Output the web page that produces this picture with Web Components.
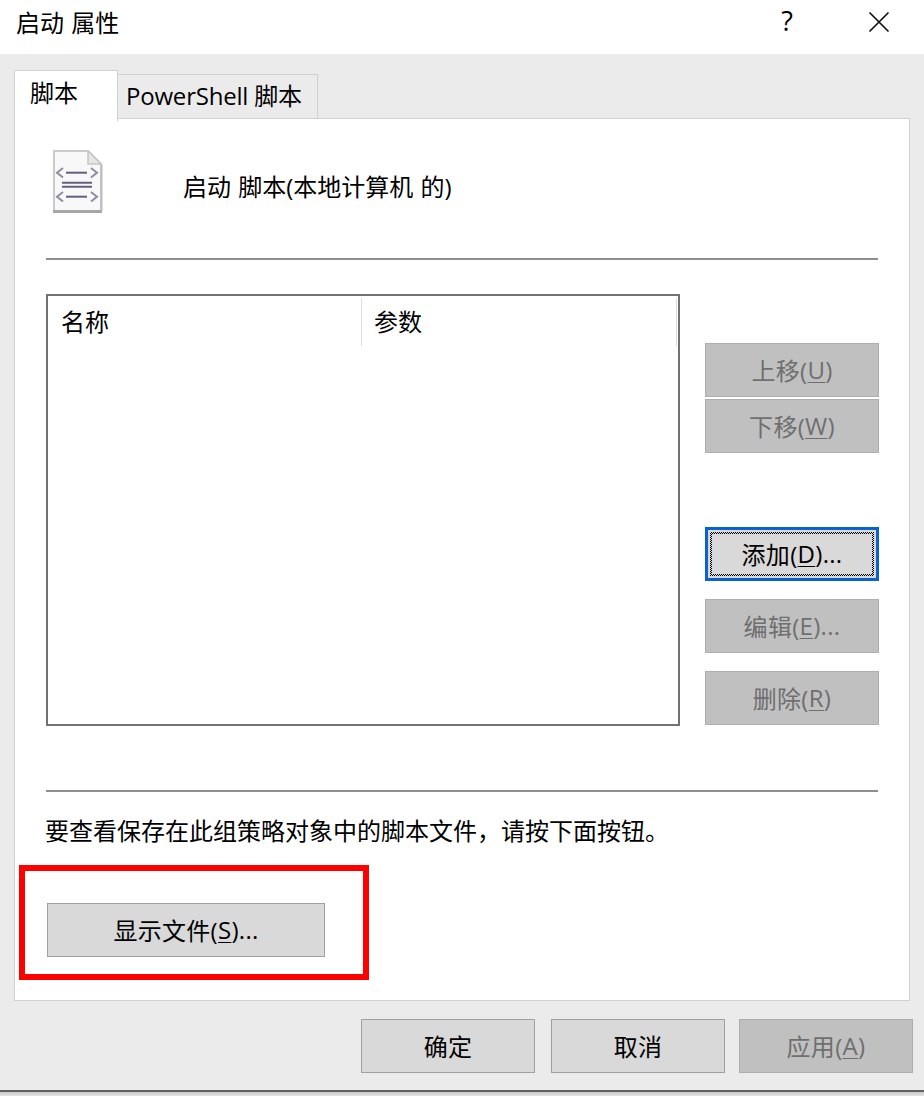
<!DOCTYPE html>
<html lang="zh-CN">
<head>
<meta charset="utf-8">
<title>启动 属性</title>
<style>
    html, body { margin: 0; background: #fff; }
    body { font: 24px "Segoe UI", "Open Sans", "Noto Sans CJK SC", sans-serif; color: #000; }
    u { text-decoration-thickness: 1px; text-underline-offset: 3px; }
</style>
</head>
<body>
<props-dialog>
    <span slot="title">启动 属性</span>
    <dialog-tabs slot="tabs">
        <span slot="active">脚本</span>
        <span slot="other">PowerShell 脚本</span>
    </dialog-tabs>
    <script-panel>
        <span slot="heading">启动 脚本(本地计算机 的)</span>
        <span slot="col1">名称</span>
        <span slot="col2">参数</span>
        <dialog-button slot="side" disabled>上移(<u>U</u>)</dialog-button>
        <dialog-button slot="side" disabled class="gap-s">下移(<u>W</u>)</dialog-button>
        <dialog-button slot="side" focused class="gap-a">添加(<u>D</u>)...</dialog-button>
        <dialog-button slot="side" disabled class="gap-b">编辑(<u>E</u>)...</dialog-button>
        <dialog-button slot="side" disabled class="gap-b">删除(<u>R</u>)</dialog-button>
        <span slot="note">要查看保存在此组策略对象中的脚本文件，请按下面按钮。</span>
        <dialog-button slot="show" style="width:278px">显示文件(<u>S</u>)...</dialog-button>
    </script-panel>
    <dialog-button slot="footer">确定</dialog-button>
    <dialog-button slot="footer">取消</dialog-button>
    <dialog-button slot="footer" disabled class="apply">应用(<u>A</u>)</dialog-button>
</props-dialog>

<script>
class PropsDialog extends HTMLElement {
    constructor() {
        super();
        this.attachShadow({ mode: 'open' });
        this.shadowRoot.innerHTML = `
            <style>
                :host {
                    display: flex;
                    flex-direction: column;
                    height: 1096px;
                    overflow: hidden;
                    background: #ebebeb;
                }
                .titlebar {
                    flex: none;
                    height: 54px;
                    display: flex;
                    align-items: center;
                    background: #fff;
                    padding: 0 0 12px 16px;
                    box-sizing: border-box;
                }
                .title { flex: 1; word-spacing: 1px; }
                .help { width: 22px; margin: 0 70px 2px 0; text-align: center; font-size: 27px; line-height: 1; }
                .close { width: 22px; height: 22px; margin: 2px 34px 0 0; display: block; }
                .body { flex: 1; padding: 16px 14px 0; min-height: 0; }
                .footer {
                    display: flex;
                    justify-content: flex-end;
                    gap: 16px;
                    padding-top: 18px;
                    margin-right: -3px;
                }
                ::slotted(.apply) { margin-left: -2px; }
                .edge {
                    flex: none;
                    height: 6px;
                    border-top: 2px solid #626262;
                    box-sizing: border-box;
                    background: linear-gradient(#c8c8c8, #e4e4e4);
                }
            </style>
            <div class="titlebar">
                <div class="title"><slot name="title"></slot></div>
                <div class="help">?</div>
                <svg class="close" viewBox="0 0 22 22" fill="none" stroke="#111" stroke-width="1.7">
                    <path d="M1.5 1.5L20.5 20.5M20.5 1.5L1.5 20.5"/>
                </svg>
            </div>
            <div class="body">
                <slot name="tabs"></slot>
                <slot></slot>
                <div class="footer"><slot name="footer"></slot></div>
            </div>
            <div class="edge"></div>
        `;
    }
}

class DialogTabs extends HTMLElement {
    constructor() {
        super();
        this.attachShadow({ mode: 'open' });
        this.shadowRoot.innerHTML = `
            <style>
                :host { display: flex; align-items: flex-end; height: 48px; position: relative; z-index: 1; }
                .tab { box-sizing: border-box; border: 1px solid #d0d0d0; }
                .on {
                    width: 104px;
                    height: 51px;
                    margin-bottom: -3px;
                    background: #fff;
                    border-bottom: 0;
                    padding: 4px 0 0 15px;
                    line-height: 36px;
                }
                .off {
                    width: 200px;
                    height: 45px;
                    margin-bottom: -1px;
                    border-left: 0;
                    padding: 3px 0 0 8px;
                    line-height: 36px;
                    white-space: nowrap;
                    letter-spacing: -0.2px;
                }
            </style>
            <div class="tab on"><slot name="active"></slot></div>
            <div class="tab off"><slot name="other"></slot></div>
        `;
    }
}

class DialogButton extends HTMLElement {
    constructor() {
        super();
        this.attachShadow({ mode: 'open' });
        this.shadowRoot.innerHTML = `
            <style>
                :host {
                    display: flex;
                    flex: none;
                    box-sizing: border-box;
                    position: relative;
                    width: 174px;
                    height: 54px;
                    align-items: center;
                    justify-content: center;
                    padding-bottom: 2px;
                    background: #d9d9d9;
                    border: 1px solid #a0a0a0;
                    white-space: nowrap;
                    letter-spacing: 0.3px;
                }
                :host([disabled]) {
                    background: #c0c0c0;
                    border-color: #adadad;
                    color: #6f6f6f;
                }
                :host([focused]) { border: 3px solid #0a62cc; }
                :host([focused])::before {
                    content: "";
                    position: absolute;
                    inset: 2px;
                    border: 2px solid transparent;
                    background: repeating-conic-gradient(#000 0 25%, #d9d9d9 0 50%) 0 0 / 2px 2px border-box;
                    -webkit-mask: linear-gradient(#000 0 0) padding-box, linear-gradient(#000 0 0) border-box;
                    -webkit-mask-composite: xor;
                    mask-composite: exclude;
                }
            </style>
            <slot></slot>
        `;
    }
}

class ScriptIcon extends HTMLElement {
    constructor() {
        super();
        this.attachShadow({ mode: 'open' });
        this.shadowRoot.innerHTML = `
            <style>:host { display: block; width: 52px; height: 64px; flex: none; } svg { display: block; }</style>
            <svg width="52" height="64" viewBox="0 0 52 64" fill="none">
                <path d="M2 1H36L49 14V61H2Z" fill="#f8f8f8" stroke="#cbcbcb" stroke-width="2"/>
                <path d="M1 61.5H50" stroke="#a6a6a6" stroke-width="3"/>
                <path d="M36 1V14H49Z" fill="#e6e6e6" stroke="#c6c6c6" stroke-width="1.5"/>
                <path d="M49.5 15V61" stroke="#bdbdbd" stroke-width="2"/>
                <g stroke="#62607f" stroke-width="2">
                    <path d="M14 22.7H35"/>
                    <path d="M10 32.7H40M10 36.7H40"/>
                    <path d="M14 46.7H35"/>
                </g>
                <g stroke="#8d8ca3" stroke-width="2">
                    <path d="M11 18L5 22.7L11 27.5M39 18L45 22.7L39 27.5"/>
                    <path d="M11 42L5 46.7L11 51.5M39 42L45 46.7L39 51.5"/>
                </g>
            </svg>
        `;
    }
}

class ScriptPanel extends HTMLElement {
    constructor() {
        super();
        this.attachShadow({ mode: 'open' });
        this.shadowRoot.innerHTML = `
            <style>
                :host {
                    display: block;
                    position: relative;
                    box-sizing: border-box;
                    width: 896px;
                    height: 883px;
                    background: #fff;
                    border: 1px solid #d0d0d0;
                    padding: 31px 31px 0;
                }
                .heading { display: flex; align-items: center; height: 64px; }
                .heading script-icon { margin: 0 79px 0 6px; }
                .htext { padding-top: 10px; line-height: 36px; word-spacing: 1px; }
                .rule { height: 2px; background: #8f8f8f; width: 832px; }
                .rule.top { margin-top: 44px; }
                .main { display: flex; margin-top: 34px; height: 432px; }
                .list {
                    flex: none;
                    box-sizing: border-box;
                    width: 634px;
                    height: 432px;
                    border: 2px solid #6f7278;
                }
                .cols { display: flex; height: 48px; margin-top: 2px; }
                .col { box-sizing: border-box; border-right: 1px solid #dedede; line-height: 48px; }
                .c1 { width: 314px; padding-left: 13px; }
                .c2 { width: 315px; padding-left: 12px; }
                .side {
                    flex: none;
                    margin-left: 25px;
                    display: flex;
                    flex-direction: column;
                    padding-top: 49px;
                }
                .rule.bottom { margin-top: 64px; }
                .note { margin-top: 21px; margin-left: -1px; line-height: 36px; white-space: nowrap; }
                .show { margin: 54px 0 0 1px; }
                .mark {
                    position: absolute;
                    left: 4px;
                    top: 746px;
                    width: 350px;
                    height: 115px;
                    box-sizing: border-box;
                    border: 6px solid #f00;
                    pointer-events: none;
                }
                ::slotted(.gap-s) { margin-top: 2px; }
                ::slotted(.gap-a) { margin-top: 74px; }
                ::slotted(.gap-b) { margin-top: 18px; }
            </style>
            <div class="heading">
                <script-icon></script-icon>
                <div class="htext"><slot name="heading"></slot></div>
            </div>
            <div class="rule top"></div>
            <div class="main">
                <div class="list">
                    <div class="cols">
                        <div class="col c1"><slot name="col1"></slot></div>
                        <div class="col c2"><slot name="col2"></slot></div>
                    </div>
                </div>
                <div class="side"><slot name="side"></slot></div>
            </div>
            <div class="rule bottom"></div>
            <div class="note"><slot name="note"></slot></div>
            <div class="show"><slot name="show"></slot></div>
            <div class="mark"></div>
        `;
    }
}

customElements.define('props-dialog', PropsDialog);
customElements.define('dialog-tabs', DialogTabs);
customElements.define('dialog-button', DialogButton);
customElements.define('script-icon', ScriptIcon);
customElements.define('script-panel', ScriptPanel);
</script>
</body>
</html>
